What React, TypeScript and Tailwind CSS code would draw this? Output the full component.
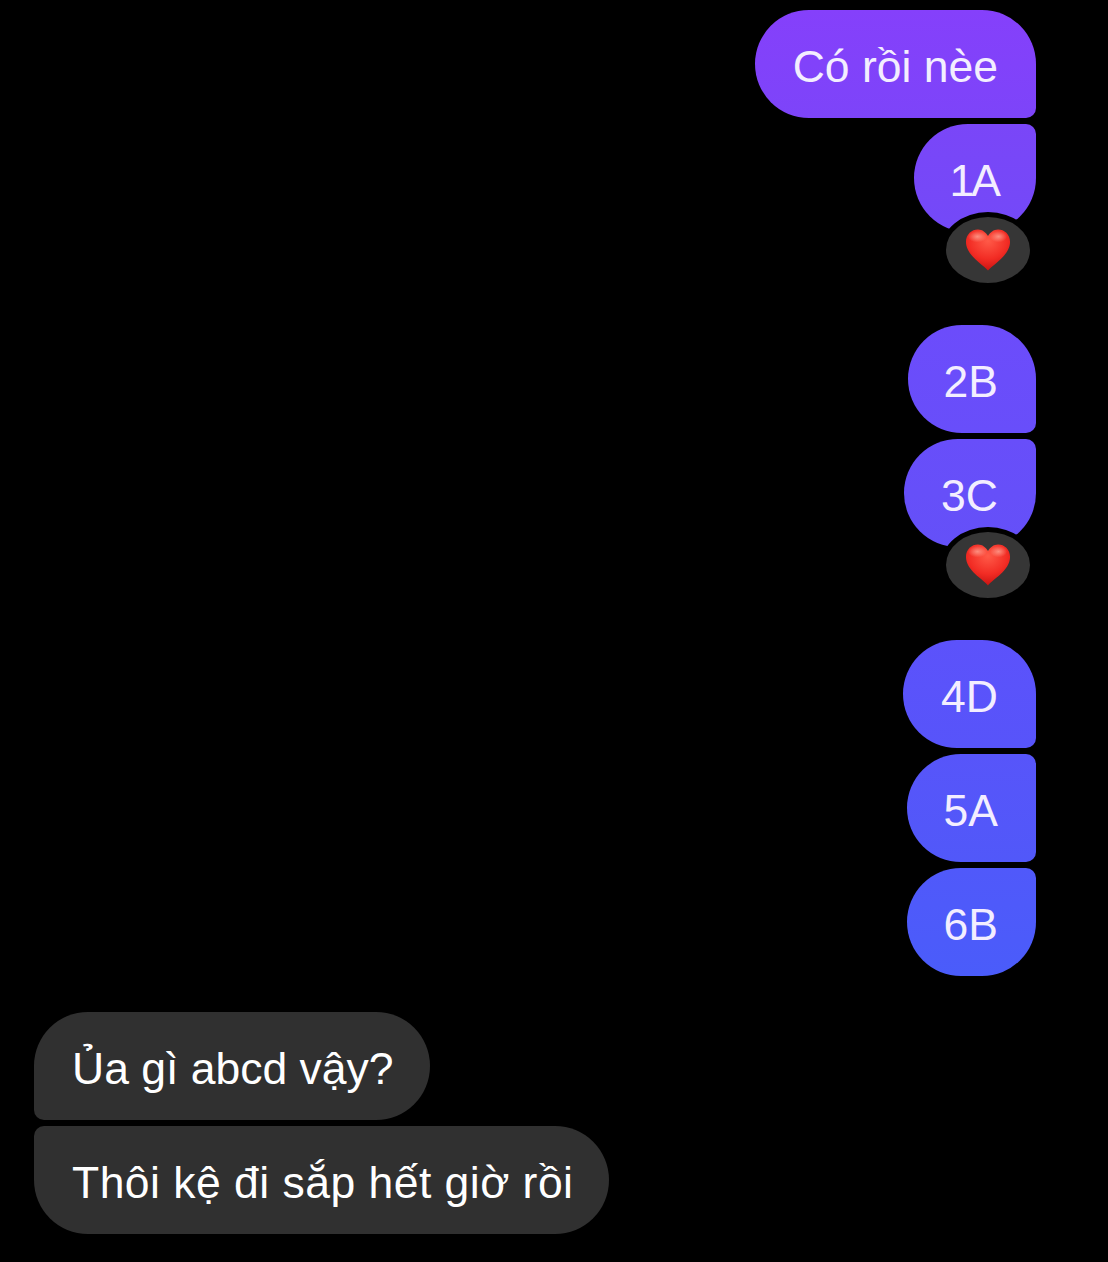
function Heart() {
  return (
    <svg viewBox="0 0 48 44" className="h-[44px] w-[46px]">
      <defs>
        <radialGradient id="heartFill" cx="0.5" cy="0.28" r="0.8">
          <stop offset="0" stopColor="#ff5a48" />
          <stop offset="0.55" stopColor="#f22c24" />
          <stop offset="1" stopColor="#bd0c0c" />
        </radialGradient>
        <radialGradient id="heartGlow">
          <stop offset="0" stopColor="#ffa898" stopOpacity="0.75" />
          <stop offset="1" stopColor="#ffa898" stopOpacity="0" />
        </radialGradient>
      </defs>
      <path
        d="M24 43.500C19 37 1 28 1 13.500C1 5.500 7 .5 13.500 .5C18 .5 22 3.500 24 7.500C26 3.500 30 .5 34.500 .5C41 .5 47 5.500 47 13.500C47 28 29 37 24 43.500Z"
        fill="url(#heartFill)"
      />
      <ellipse cx="13" cy="8" rx="10" ry="6" fill="url(#heartGlow)" />
      <ellipse cx="35" cy="8" rx="9" ry="6" fill="url(#heartGlow)" />
    </svg>
  );
}

function Reaction() {
  return (
    <div className="absolute right-[1px] bottom-[-56px] flex h-[76px] w-[94px] items-center justify-center rounded-[47px/38px] border-[5px] border-black bg-[#363636]">
      <Heart />
    </div>
  );
}

function Bubble({ text, className, textClass = "", reaction = false }: { text: string; className: string; textClass?: string; reaction?: boolean }) {
  return (
    <div className={`relative flex h-[108px] items-center ${className}`}>
      <span className={`translate-y-[3px] ${textClass}`}>{text}</span>
      {reaction ? <Reaction /> : null}
    </div>
  );
}

export default function App() {
  return (
    <div className="h-[1262px] overflow-hidden bg-black pt-[10px] font-['Liberation_Sans',sans-serif] text-[44.5px] leading-none text-[#f3eeff]">
      <div className="flex flex-col items-end gap-[6px] pr-[72px]">
        <Bubble text="Có rồi nèe" className="w-[281px] justify-end rounded-[54px] rounded-br-[10px] bg-gradient-to-b from-[#8540fb] to-[#7d44f9] pr-[38px]" />
        <Bubble text="1A" textClass="tracking-[-3px]" reaction className="w-[122px] justify-end rounded-[54px] rounded-tr-[10px] bg-gradient-to-b from-[#7a46f8] to-[#7349f8] pr-[38px]" />
        <Bubble text="2B" className="mt-[87px] w-[128px] justify-end rounded-[54px] rounded-br-[10px] bg-gradient-to-b from-[#6c4cfb] to-[#684efa] pr-[38px]" />
        <Bubble text="3C" reaction className="w-[132px] justify-end rounded-[54px] rounded-tr-[10px] bg-gradient-to-b from-[#684efa] to-[#6450f8] pr-[38px]" />
        <Bubble text="4D" className="mt-[87px] w-[133px] justify-end rounded-[54px] rounded-br-[10px] bg-gradient-to-b from-[#5c52fb] to-[#5754fa] pr-[38px]" />
        <Bubble text="5A" className="w-[129px] justify-end rounded-l-[54px] rounded-r-[10px] bg-gradient-to-b from-[#5755fa] to-[#5158f9] pr-[38px]" />
        <Bubble text="6B" className="w-[129px] justify-end rounded-[54px] rounded-tr-[10px] bg-gradient-to-b from-[#5059fa] to-[#4a5cfa] pr-[38px]" />
      </div>
      <div className="mt-[36px] flex flex-col items-start gap-[6px] pl-[34px] text-white">
        <Bubble text="Ủa gì abcd vậy?" className="w-[396px] rounded-[54px] rounded-bl-[10px] bg-[#303030] pl-[38px]" />
        <Bubble text="Thôi kệ đi sắp hết giờ rồi" textClass="tracking-[0.47px]" className="w-[575px] rounded-[54px] rounded-tl-[10px] bg-[#303030] pl-[38px]" />
      </div>
    </div>
  );
}
